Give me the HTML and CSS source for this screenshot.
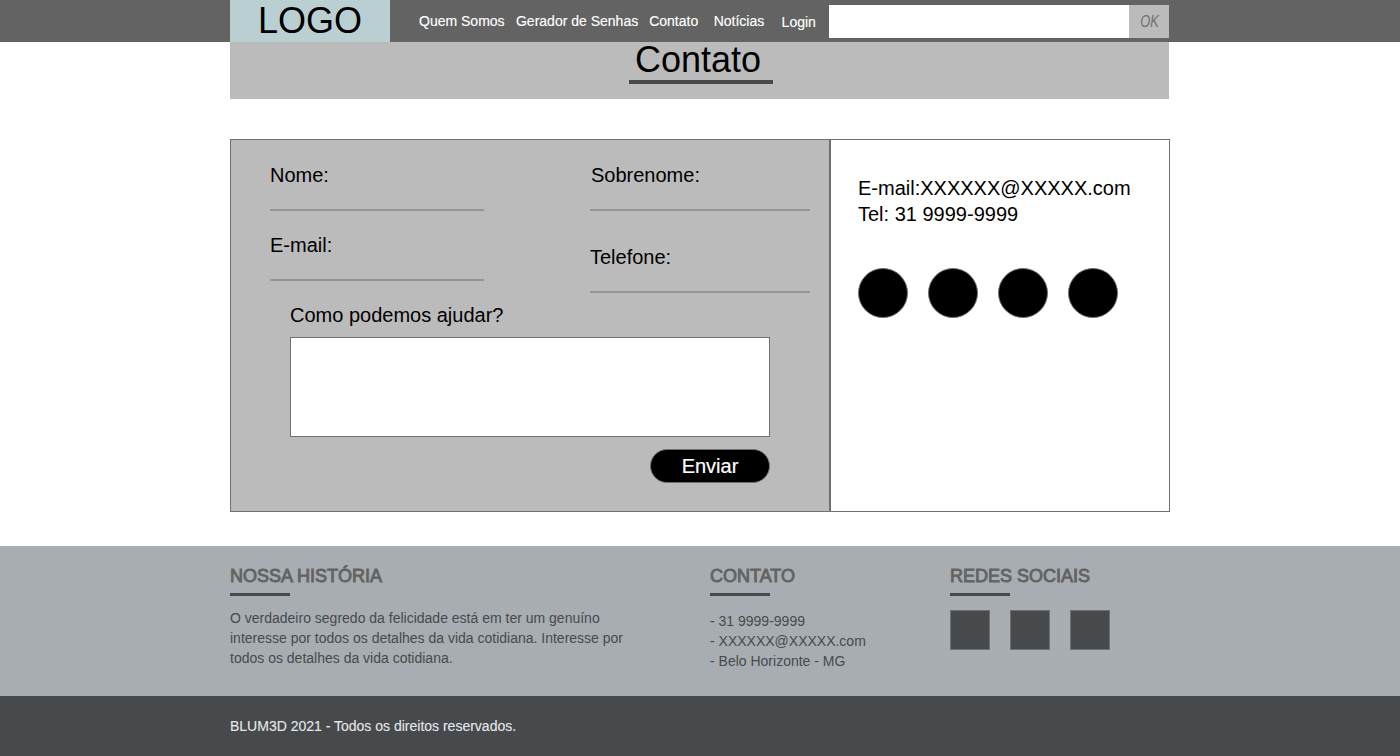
FILE: index.html
```html
<!DOCTYPE html>
<html lang="pt-BR">
<head>
<meta charset="utf-8">
<title>Contato</title>
<link rel="stylesheet" href="styles.css">
</head>
<body>
<header class="topbar">
  <div class="container topbar-inner">
    <a class="logo">LOGO</a>
    <nav class="menu">
      <a class="menu-company">Quem Somos</a>
      <a class="menu-passwords">Gerador de Senhas</a>
      <a class="menu-contact">Contato</a>
      <a class="menu-news">Notícias</a>
      <a class="menu-login">Login</a>
    </nav>
    <form class="search">
      <input class="search-input" type="text" aria-label="Buscar">
      <button class="search-button" type="button"><span class="search-ok">OK</span></button>
    </form>
  </div>
</header>
<main class="container">
  <div class="banner"><h1 class="title">Contato</h1></div>
  <section class="panels">
    <form class="contact-form">
      <div class="fields">
        <div class="column">
          <label class="field">Nome:</label>
          <label class="field">E-mail:</label>
        </div>
        <div class="column column-right">
          <label class="field field-surname">Sobrenome:</label>
          <label class="field">Telefone:</label>
        </div>
      </div>
      <div class="message">
        <label class="message-label">Como podemos ajudar?</label>
        <textarea class="message-box" aria-label="Mensagem"></textarea>
        <button class="send" type="button">Enviar</button>
      </div>
    </form>
    <aside class="info">
      <p class="info-text">E-mail:XXXXXX@XXXXX.com<br>Tel: 31 9999-9999</p>
      <div class="circles"><a class="circle"></a><a class="circle"></a><a class="circle"></a><a class="circle"></a></div>
    </aside>
  </section>
</main>
<footer class="footer">
  <div class="footer-main">
    <div class="container footer-columns">
      <section>
        <h2 class="footer-title">NOSSA HISTÓRIA</h2>
        <p class="story">O verdadeiro segredo da felicidade está em ter um genuíno interesse por todos os detalhes da vida cotidiana. Interesse por todos os detalhes da vida cotidiana.</p>
      </section>
      <section>
        <h2 class="footer-title">CONTATO</h2>
        <p class="footer-contact">- 31 9999-9999<br>- XXXXXX@XXXXX.com<br>- Belo Horizonte - MG</p>
      </section>
      <section>
        <h2 class="footer-title">REDES SOCIAIS</h2>
        <div class="squares"><a class="square"></a><a class="square"></a><a class="square"></a></div>
      </section>
    </div>
  </div>
  <div class="copyright"><p class="container copyright-text">BLUM3D 2021 - Todos os direitos reservados.</p></div>
</footer>
</body>
</html>
```
FILE: styles.css
```css
* { box-sizing: border-box; margin: 0; padding: 0; }
body { background: #fff; color: #000; font-family: "Liberation Sans", Arial, sans-serif; font-size: 20px; line-height: 22px; overflow: hidden; }
input, textarea, button { border: 0; border-radius: 0; font-family: inherit; resize: none; }
.container { width: 940px; margin: 0 auto; }

.topbar { height: 42px; background: #636363; }
.topbar-inner { display: flex; }
.logo { width: 160px; height: 42px; background: #bacfd2; font-size: 36px; line-height: 41px; text-align: center; }
.menu { display: flex; width: 439px; padding: 11px 0 0 29px; color: #fff; font-size: 14px; line-height: 20px; white-space: nowrap; -webkit-text-stroke: 0.15px #fff; }
.menu-company { margin-right: 11.4px; }
.menu-passwords { margin-right: 11px; }
.menu-contact { margin-right: 15.4px; }
.menu-news { margin-right: 17.4px; }
.menu-login { padding-top: 1px; }
.search { display: flex; height: 33px; margin-top: 5px; }
.search-input { width: 300px; background: #fff; }
.search-button { width: 40px; padding-left: 2px; background: #bbb; color: #707070; font-size: 16px; font-style: italic; text-align: center; }
.search-ok { display: inline-block; transform: scaleX(0.8); }

.banner { width: 939px; height: 57px; padding-left: 399px; background: #bbb; }
.title { width: 144px; height: 42px; padding-left: 6px; border-bottom: 4px solid #464a4c; font-size: 36px; font-weight: 400; line-height: 36px; }

.panels { display: flex; height: 373px; margin: 40px 0 34px; }
.contact-form { width: 600px; padding: 24px 0 0 39px; border: 1px solid #707070; background: #bbb; }
.fields { display: flex; justify-content: space-between; width: 540px; height: 140px; }
.column { display: flex; flex-direction: column; gap: 23px; width: 214px; }
.column-right { gap: 35px; width: 220px; }
.field { display: block; height: 47px; border-bottom: 2px solid #959595; }
.field-surname { padding-left: 1px; }
.message { display: flex; flex-direction: column; width: 480px; margin-left: 20px; }
.message-label { height: 33px; }
.message-box { height: 100px; border: 1px solid #707070; background: #fff; }
.send { align-self: flex-end; width: 120px; height: 34px; margin-top: 12px; border: 1px solid #707070; border-radius: 17px; background: #000; color: #fff; font-size: 20px; line-height: 32px; -webkit-text-stroke: 0.2px #fff; }
.info { width: 340px; padding: 35px 0 0 27px; border: 1px solid #707070; }
.info-text { line-height: 26px; }
.circles { display: flex; gap: 20px; margin-top: 41px; }
.circle { width: 50px; height: 50px; border: 1px solid #707070; border-radius: 50%; background: #000; }

.footer { font-size: 14px; line-height: 20px; }
.footer-main { height: 150px; padding-top: 20px; background: #a8adb1; color: #464a4c; }
.footer-columns { display: grid; grid-template-columns: 480px 240px 220px; }
.footer-title { color: #636363; font-size: 18px; font-weight: 400; line-height: 20px; -webkit-text-stroke: 0.9px #636363; }
.footer-title::after { content: ""; display: block; width: 60px; height: 3px; margin-top: 7px; background: #464a4c; }
.story { width: 400px; margin-top: 12px; }
.footer-contact { margin-top: 15px; }
.squares { display: flex; gap: 20px; margin-top: 14px; }
.square { width: 40px; height: 40px; border: 1px solid #707070; background: #464a4c; }
.copyright { height: 60px; padding-top: 20px; background: #464a4c; color: #e6e9ea; }
.copyright-text { -webkit-text-stroke: 0.1px #e6e9ea; }
```
